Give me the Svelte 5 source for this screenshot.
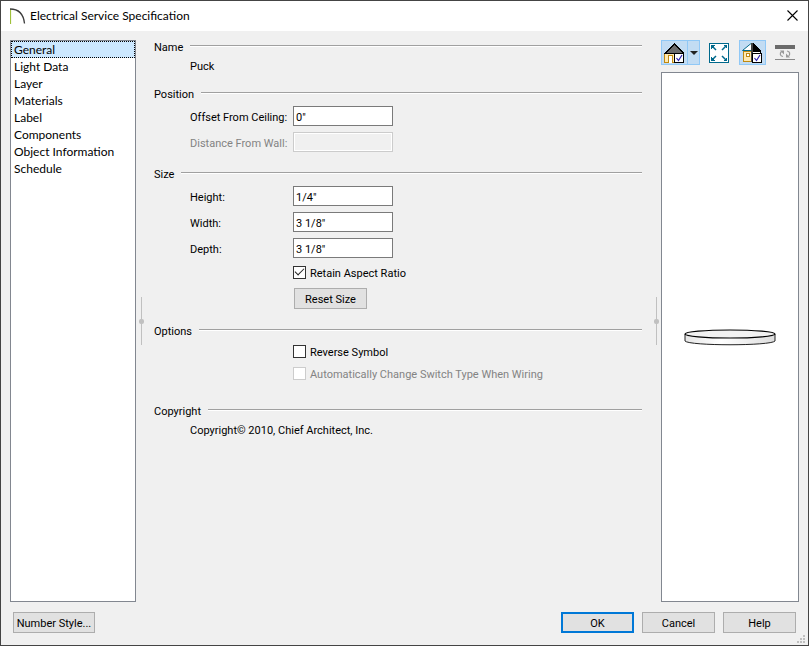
<script>
    let pages = [
        'General',
        'Light Data',
        'Layer',
        'Materials',
        'Label',
        'Components',
        'Object Information',
        'Schedule'
    ];
    let activePage = 'General';

    let offset = '0"';
    let wallDistance = '';
    let dimensions = [
        { id: 'height', label: 'Height:', value: '1/4"' },
        { id: 'width', label: 'Width:', value: '3 1/8"' },
        { id: 'depth', label: 'Depth:', value: '3 1/8"' }
    ];

    let retainAspect = true;
    let reverseSymbol = false;
    let autoSwitch = false;

    function resetSize() {
        dimensions[0].value = '1/4"';
        dimensions[1].value = '3 1/8"';
        dimensions[2].value = '3 1/8"';
    }
</script>

<div class="dialog">
    <header class="titlebar">
        <svg class="logo" width="16" height="16" viewBox="0 0 16 16">
            <path d="M.5 1v15" stroke="#9fc03b" stroke-width="1.2" fill="none" />
            <path d="M0 1C8 1 13.500 6 14.500 15.500" stroke="#3c3c3c" stroke-width="1.3" fill="none" />
        </svg>
        <h1 class="title">Electrical Service Specification</h1>
        <button class="close" aria-label="Close">
            <svg width="11" height="11" viewBox="0 0 11 11">
                <path d="M.5.5l10 10M10.5.5l-10 10" stroke="#000" stroke-width="1.1" fill="none" />
            </svg>
        </button>
    </header>

    <div class="content">
        <nav class="pages">
            {#each pages as page}
                <button class="page" class:active={page === activePage} on:click={() => (activePage = page)}>
                    {page}
                </button>
            {/each}
        </nav>

        <div class="splitter"><span class="grip"></span></div>

        <main class="form">
            <section class="group name">
                <h2 class="group-title">Name</h2>
                <div class="row indent">Puck</div>
            </section>

            <section class="group">
                <h2 class="group-title">Position</h2>
                <div class="field">
                    <label for="offset">Offset From Ceiling:</label>
                    <input id="offset" type="text" bind:value={offset} />
                </div>
                <div class="field disabled">
                    <label for="wall">Distance From Wall:</label>
                    <input id="wall" type="text" bind:value={wallDistance} disabled />
                </div>
            </section>

            <section class="group">
                <h2 class="group-title">Size</h2>
                {#each dimensions as dim}
                    <div class="field">
                        <label for={dim.id}>{dim.label}</label>
                        <input id={dim.id} type="text" bind:value={dim.value} />
                    </div>
                {/each}
                <label class="row check">
                    <input type="checkbox" bind:checked={retainAspect} />
                    <span>Retain Aspect Ratio</span>
                </label>
                <button class="btn reset" on:click={resetSize}>Reset Size</button>
            </section>

            <section class="group options">
                <h2 class="group-title">Options</h2>
                <label class="row check">
                    <input type="checkbox" bind:checked={reverseSymbol} />
                    <span>Reverse Symbol</span>
                </label>
                <label class="row check disabled">
                    <input type="checkbox" bind:checked={autoSwitch} disabled />
                    <span>Automatically Change Switch Type When Wiring</span>
                </label>
            </section>

            <section class="group">
                <h2 class="group-title">Copyright</h2>
                <div class="row indent">Copyright© 2010, Chief Architect, Inc.</div>
            </section>
        </main>

        <div class="splitter"><span class="grip"></span></div>

        <aside class="preview">
            <div class="toolbar">
                <div class="split on">
                    <button class="tool" aria-label="Plan display">
                        <svg width="20" height="20" viewBox="0 0 20 20" shape-rendering="crispEdges">
                            <path d="M.5 10.500h10v9H.5z" fill="#ffe9b0" stroke="#c08a10" />
                            <path d="M4.500 19.500v-7h4v7" fill="#fff" stroke="#c08a10" />
                            <path d="M10 0L20 10v1H0v-1z" fill="#000" />
                            <path d="M10 2l8 8H2z" fill="#6b6b6b" />
                            <path d="M10.500 10.500h9v9h-9z" fill="#fff" stroke="#000" />
                            <path d="M12.500 15l2 2.500 3.500-5.500" fill="none" stroke="#2b1fb0" stroke-width="1.2" shape-rendering="auto" />
                        </svg>
                    </button>
                    <button class="drop" aria-label="Display options">
                        <svg width="8" height="4" viewBox="0 0 8 4"><path d="M0 0h8L4 4z" fill="#222" /></svg>
                    </button>
                </div>
                <button class="tool" aria-label="Fill window">
                    <svg width="20" height="20" viewBox="0 0 20 20" shape-rendering="crispEdges">
                        <path d="M.5.5h19v19H.5z" fill="#fff" stroke="#00698c" />
                        <path d="M2 2h4L2 6zM18 2h-4l4 4zM2 18h4l-4-4zM18 18h-4l4-4z" fill="#00698c" />
                        <path d="M3 3l4 4M17 3l-4 4M3 17l4-4M17 17l-4-4" stroke="#00698c" stroke-width="1.500" shape-rendering="auto" />
                    </svg>
                </button>
                <button class="tool on" aria-label="Color display">
                    <svg width="20" height="20" viewBox="0 0 20 20" shape-rendering="crispEdges">
                        <path d="M1.500 8.500h8v10h-8z" fill="#ffe9b0" stroke="#c08a10" />
                        <path d="M4.500 10.500h3v3h-3z" fill="#fff" stroke="#c08a10" />
                        <path d="M10 8h8.500v10H10z" fill="#fff" stroke="#000" />
                        <path d="M9 0v7H1z" fill="#fff" />
                        <path d="M9 .5L.5 7.500H9" fill="none" stroke="#00698c" shape-rendering="auto" />
                        <path d="M10 0h1l8 7v1h-9z" fill="#000" />
                        <path d="M9 0h2v19H9z" fill="#444" />
                        <path d="M10.500 10.500h9v9h-9z" fill="#fff" stroke="#000" />
                        <path d="M12.500 15l2 2.500 3.500-5.500" fill="none" stroke="#2b1fb0" stroke-width="1.2" shape-rendering="auto" />
                    </svg>
                </button>
                <button class="tool" aria-label="Rotate" disabled>
                    <svg width="20" height="20" viewBox="0 0 20 20">
                        <path d="M0 2h20v4H0z" fill="#6b6b6b" />
                        <path d="M0 16h20v1H0z" fill="#888" />
                        <path d="M8 13.500C5 13 4.500 10.500 6.500 8.500M12 8C15 8.500 15.500 11 13.500 13.500" fill="none" stroke="#999" stroke-width="1.200" />
                        <path d="M5 7.500h4v4zM11 10.500v4h4z" fill="#999" />
                    </svg>
                </button>
            </div>
            <div class="canvas">
                <svg width="92" height="17" viewBox="0 0 92 17">
                    <defs>
                        <linearGradient id="rim">
                            <stop offset="0" stop-color="#e6e6e6" />
                            <stop offset="0.4" stop-color="#fff" />
                            <stop offset="1" stop-color="#ddd" />
                        </linearGradient>
                    </defs>
                    <path d="M1 5v7c4 5 86 5 90 0V5" fill="url(#rim)" stroke="#222" />
                    <ellipse cx="46" cy="5" rx="45" ry="4" fill="#f2f2f2" stroke="#000" stroke-width="1.2" />
                </svg>
            </div>
        </aside>
    </div>

    <footer class="actions">
        <button class="btn number-style">Number Style...</button>
        <button class="btn primary">OK</button>
        <button class="btn">Cancel</button>
        <button class="btn">Help</button>
    </footer>
    <svg class="resize" width="8" height="8" viewBox="0 0 8 8" fill="#bfbfbf">
        <path d="M6 0h2v2H6zM3 3h2v2H3zM6 3h2v2H6zM0 6h2v2H0zM3 6h2v2H3zM6 6h2v2H6z" />
    </svg>
</div>

<style>
    :global(body) {
        margin: 0;
    }

    .dialog {
        position: relative;
        box-sizing: border-box;
        min-height: 100vh;
        display: flex;
        flex-direction: column;
        background: #f0f0f0;
        border: 1px solid #444;
        color: #000;
        font: 11px/14px Roboto, "Liberation Sans", sans-serif;
    }

    button,
    input {
        font: inherit;
        color: inherit;
        margin: 0;
    }

    .titlebar {
        display: flex;
        align-items: center;
        height: 30px;
        padding: 0 10px 0 9px;
        background: #fff;
    }

    .title {
        flex: 1;
        margin: 0 0 0 4px;
        font: 12px/16px Lato, "Open Sans", sans-serif;
    }

    .close {
        display: flex;
        padding: 0 0 2px;
        border: none;
        background: none;
    }

    .content {
        flex: 1;
        display: flex;
        padding: 9px 9px 0;
    }

    .pages {
        box-sizing: border-box;
        width: 126px;
        border: 1px solid #828790;
        background: #fff;
    }

    .page {
        display: block;
        box-sizing: border-box;
        width: 100%;
        height: 17px;
        padding: 0 3px;
        border: none;
        background: none;
        text-align: left;
        font: 12px/17px Lato, "Open Sans", sans-serif;
    }

    .page.active {
        background: #cce8ff;
        outline: 1px dotted #000;
        outline-offset: -1px;
    }

    .splitter {
        display: flex;
        align-items: center;
        justify-content: center;
        width: 10px;
    }

    .grip {
        display: flex;
        align-items: center;
        justify-content: center;
        width: 1px;
        height: 48px;
        background: #c0c0c0;
    }

    .grip::after {
        content: '';
        flex: none;
        width: 5px;
        height: 5px;
        border-radius: 2px;
        background: #c0c0c0;
    }

    .form {
        flex: 1;
        padding: 1px 9px 0 8px;
    }

    .group {
        display: flex;
        flex-direction: column;
        gap: 6px;
        margin-bottom: 16px;
    }

    .group.name {
        margin-bottom: 13px;
    }

    .group.options {
        margin-bottom: 24px;
    }

    .group-title {
        display: flex;
        align-items: center;
        margin: 0 0 -2px;
        font: inherit;
    }

    .group-title::after {
        content: '';
        flex: 1;
        height: 1px;
        margin: 0 0 4px 7px;
        background: #a0a0a0;
        border-bottom: 1px solid #fff;
    }

    .row {
        display: flex;
        align-items: center;
        height: 16px;
    }

    .indent {
        padding-left: 36px;
    }

    .field {
        display: grid;
        grid-template-columns: 103px 100px;
        align-items: center;
        padding-left: 36px;
    }

    .field label {
        padding-top: 4px;
    }

    .field input {
        box-sizing: border-box;
        width: 100px;
        height: 20px;
        padding: 2px 2px 0;
        border: 1px solid #7a7a7a;
        background: #fff;
    }

    .field input:disabled {
        border-color: #ccc;
        background: #f0f0f0;
        box-shadow: inset 0 0 0 1px #fff;
    }

    .disabled {
        color: #838383;
    }

    .check {
        gap: 4px;
        padding-left: 139px;
    }

    .check span {
        padding-top: 3px;
    }

    .check input {
        appearance: none;
        display: grid;
        place-items: center;
        box-sizing: border-box;
        width: 13px;
        height: 13px;
        border: 1px solid #333;
        background: #fff;
    }

    .check input:disabled {
        border-color: #ccc;
    }

    .check input:checked::before {
        content: '';
        width: 8px;
        height: 4px;
        margin-bottom: 3px;
        border-left: 1px solid #222;
        border-bottom: 1px solid #222;
        transform: rotate(-45deg);
    }

    .btn {
        box-sizing: border-box;
        width: 73px;
        height: 21px;
        padding: 2px 0 0;
        border: 1px solid #adadad;
        background: #e1e1e1;
        text-align: center;
    }

    .reset {
        margin: 2px 0 0 140px;
    }

    .primary {
        border: 2px solid #0078d7;
    }

    .number-style {
        width: 82px;
        margin-right: auto;
    }

    .preview {
        display: flex;
        flex-direction: column;
        width: 138px;
    }

    .toolbar {
        display: flex;
        gap: 6px;
        margin-bottom: 7px;
    }

    .split {
        display: flex;
    }

    .tool,
    .drop {
        display: flex;
        align-items: center;
        justify-content: center;
        box-sizing: border-box;
        width: 27px;
        height: 25px;
        padding: 0 1px 0 0;
        border: 1px solid transparent;
        background: none;
    }

    .drop {
        width: 12px;
        padding: 0;
    }

    .on,
    .on .drop {
        background: #c2dcf3;
    }

    .tool.on,
    .on .tool,
    .on .drop {
        border-color: #90c8f6;
    }

    .on .drop {
        border-left: none;
    }

    .canvas {
        flex: 1;
        display: flex;
        align-items: center;
        justify-content: center;
        border: 1px solid #828790;
        background: #fff;
    }

    .actions {
        display: flex;
        gap: 8px;
        padding: 10px 12px 12px;
    }

    .resize {
        position: absolute;
        right: 3px;
        bottom: 2px;
    }
</style>
